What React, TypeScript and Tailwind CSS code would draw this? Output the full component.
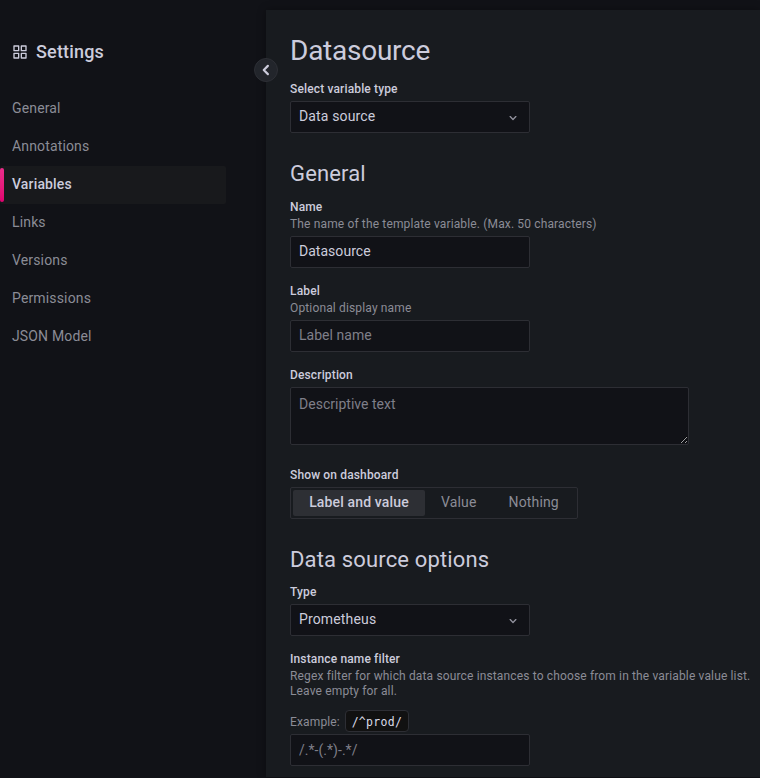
import React from 'react';

const navItems = ['General', 'Annotations', 'Variables', 'Links', 'Versions', 'Permissions', 'JSON Model'];

const inputClass =
  'block h-8 w-60 rounded-[2px] border border-[#2d2e34] bg-[#111217] px-2 text-sm tracking-[0.03px] text-[#ccccdc] outline-none placeholder:text-[#7f7f89]';

function Label({ text, children }: { text: string; children?: React.ReactNode }) {
  return (
    <div className="pb-1 text-xs leading-[15px] tracking-[0.145px]">
      <div className="font-medium text-[#ccccdc]">{text}</div>
      {children && <div className="mt-[2px] text-[#8b8c96]">{children}</div>}
    </div>
  );
}

function Select({ value }: { value: string }) {
  return (
    <div className="flex h-8 w-60 items-center justify-between rounded-[2px] border border-[#2d2e34] bg-[#111217] pr-2 pl-2 text-sm tracking-[0.15px] text-[#ccccdc]">
      <span className="pb-[2px]">{value}</span>
      <svg className="mt-[2px] size-4" viewBox="0 0 24 24" fill="#92929e">
        <path d="M17 9.17a1 1 0 0 0-1.41 0L12 12.71 8.46 9.17a1 1 0 0 0-1.41 0 1 1 0 0 0 0 1.42l4.24 4.24a1 1 0 0 0 1.42 0L17 10.59a1 1 0 0 0 0-1.42Z" />
      </svg>
    </div>
  );
}

export default function App() {
  return (
    <div className="flex h-[778px] w-[760px] overflow-hidden bg-[#111217] font-[Roboto,sans-serif]">
      <aside className="w-[266px] shrink-0 pt-10">
        <h4 className="flex h-6 items-center gap-2 pl-3 text-lg font-medium tracking-[0.17px] text-[#ccccdc]">
          <svg className="size-4" viewBox="0 0 24 24" fill="#ccccdc">
            <path d="M10 13H3a1 1 0 0 0-1 1v7a1 1 0 0 0 1 1h7a1 1 0 0 0 1-1v-7a1 1 0 0 0-1-1Zm-1 7H4v-5h5ZM21 2h-7a1 1 0 0 0-1 1v7a1 1 0 0 0 1 1h7a1 1 0 0 0 1-1V3a1 1 0 0 0-1-1Zm-1 7h-5V4h5Zm1 4h-7a1 1 0 0 0-1 1v7a1 1 0 0 0 1 1h7a1 1 0 0 0 1-1v-7a1 1 0 0 0-1-1Zm-1 7h-5v-5h5ZM10 2H3a1 1 0 0 0-1 1v7a1 1 0 0 0 1 1h7a1 1 0 0 0 1-1V3a1 1 0 0 0-1-1ZM9 9H4V4h5Z" />
          </svg>
          Settings
        </h4>
        <nav className="mt-[26px] w-[226px] text-sm tracking-[0.15px]">
          {navItems.map((item) =>
            item === 'Variables' ? (
              <a key={item} className="flex h-[38px] items-center rounded-[2px] bg-[#18191c] font-medium text-[#ccccdc]">
                <span className="mr-2 h-[34px] w-1 rounded-[2px] bg-linear-to-b from-[#eb2c8b] to-[#e0006f]" />
                <span className="pb-[2px]">{item}</span>
              </a>
            ) : (
              <a key={item} className="flex h-[38px] items-center pb-[2px] pl-3 text-[#8b8c96]">
                {item}
              </a>
            ),
          )}
        </nav>
      </aside>

      <main className="relative mt-[10px] h-[767px] flex-1 bg-[#181b1f] pt-[25px] pl-6 shadow-[0_0_8px_rgba(0,0,0,0.35)]">
        <button className="absolute top-12 -left-3 flex size-6 items-center justify-center rounded-full border border-[#2d2f35] bg-[#22252b]">
          <svg className="size-[18px] shrink-0" viewBox="0 0 24 24" fill="none" stroke="#ccccdc" strokeWidth="2.9" strokeLinecap="round" strokeLinejoin="round">
            <path d="M14.5 6.5l-5.5 5.5 5.5 5.5" />
          </svg>
        </button>

        <h1 className="text-[28px] leading-8 tracking-[-0.25px] text-[#ccccdc]">Datasource</h1>
        <div className="mt-[15px]">
          <Label text="Select variable type" />
          <Select value="Data source" />
        </div>

        <section className="mt-[27px]">
          <h3 className="text-[22px] leading-7 tracking-[0.14px] text-[#ccccdc]">General</h3>
          <div className="mt-3">
            <Label text="Name">The name of the template variable. (Max. 50 characters)</Label>
            <input className={`${inputClass} pb-[2px]`} defaultValue="Datasource" />
          </div>
          <div className="mt-4">
            <Label text="Label">Optional display name</Label>
            <input className={`${inputClass} pb-[2px]`} placeholder="Label name" />
          </div>
          <div className="mt-4">
            <Label text="Description" />
            <textarea
              className="block h-[58px] w-[399px] resize rounded-[2px] border border-[#2d2e34] bg-[#111217] px-2 py-[5px] text-sm leading-[22px] tracking-[0.02px] text-[#ccccdc] outline-none placeholder:text-[#7f7f89]"
              placeholder="Descriptive text"
            />
          </div>
          <div className="mt-[23px]">
            <Label text="Show on dashboard" />
            <div className="flex h-8 w-72 items-center rounded-[2px] border border-[#2d2e34] p-[2px] text-sm tracking-[0.15px] text-[#8b8c96]">
              <span className="flex h-[26px] w-[132px] items-center justify-center rounded-[2px] bg-[#2d2f34] pb-[2px] font-medium text-[#ccccdc]">
                Label and value
              </span>
              <span className="px-4 pb-[2px]">Value</span>
              <span className="px-4 pb-[2px]">Nothing</span>
            </div>
          </div>
        </section>

        <section className="mt-[27px]">
          <h3 className="text-[22px] leading-7 tracking-[0.15px] text-[#ccccdc]">Data source options</h3>
          <div className="mt-[11px]">
            <Label text="Type" />
            <Select value="Prometheus" />
          </div>
          <div className="mt-4">
            <Label text="Instance name filter">
              <div className="whitespace-nowrap">
                Regex filter for which data source instances to choose from in the variable value list.
                <br />
                Leave empty for all.
              </div>
              <div className="mt-[11px] -mb-[2px] flex h-[22px] items-center gap-[5px]">
                <span className="pt-[2px]">Example:</span>
                <code className="flex h-[22px] w-16 items-center justify-center rounded-[4px] border border-[#2d2e34] bg-[#111111] pt-[2px] font-['DejaVu_Sans_Mono',monospace] text-[11.5px] tracking-[0.3px] text-[#dcdce8]">
                  /^prod/
                </code>
              </div>
            </Label>
            <input className={`${inputClass} pb-0`} placeholder="/.*-(.*)-.*/" />
          </div>
        </section>
      </main>
    </div>
  );
}
